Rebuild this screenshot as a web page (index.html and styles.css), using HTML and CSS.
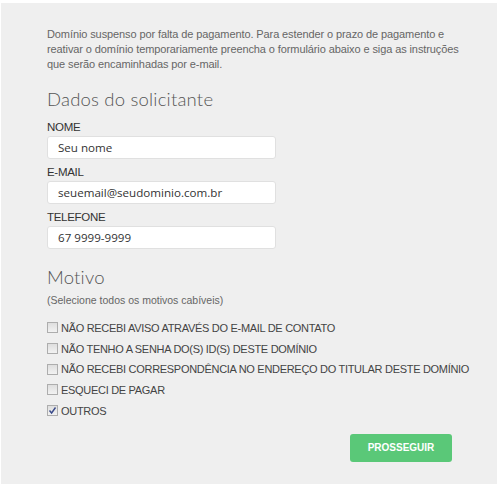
FILE: index.html
```html
<!DOCTYPE html>
<html lang="pt">
<head>
<meta charset="utf-8">
<link rel="stylesheet" href="styles.css">
</head>
<body>
<div class="panel">
  <form class="form">
    <p class="intro">Domínio suspenso por falta de pagamento. Para estender o prazo de pagamento e<br>reativar o domínio temporariamente preencha o formulário abaixo e siga as instruções<br>que serão encaminhadas por e-mail.</p>
    <h2 class="title">Dados do solicitante</h2>
    <label class="field-label first">NOME</label>
    <div class="input">Seu nome</div>
    <label class="field-label">E-MAIL</label>
    <div class="input">seuemail@seudominio.com.br</div>
    <label class="field-label">TELEFONE</label>
    <div class="input">67 9999-9999</div>
    <h2 class="title title-motivo">Motivo</h2>
    <p class="hint">(Selecione todos os motivos cabíveis)</p>
    <ul class="checks">
      <li><span class="box"></span>NÃO RECEBI AVISO ATRAVÉS DO E-MAIL DE CONTATO</li>
      <li><span class="box"></span>NÃO TENHO A SENHA DO(S) ID(S) DESTE DOMÍNIO</li>
      <li><span class="box"></span>NÃO RECEBI CORRESPONDÊNCIA NO ENDEREÇO DO TITULAR DESTE DOMÍNIO</li>
      <li><span class="box"></span>ESQUECI DE PAGAR</li>
      <li><span class="box checked"><svg width="9" height="9" viewBox="0 0 9 9"><path d="M1.5 4.5 L3.6 7 L7.5 1.5" fill="none" stroke="#3a4a8a" stroke-width="1.4"/></svg></span>OUTROS</li>
    </ul>
    <div class="actions"><span class="btn">PROSSEGUIR</span></div>
  </form>
</div>
</body>
</html>
```
FILE: styles.css
```css
html, body { margin: 0; padding: 0; background: #fff; }
body { font-family: "Liberation Sans", Arial, sans-serif; }
.panel {
  margin: 3px 3px 0 1px;
  background: #efefef;
  height: 481px;
  box-sizing: border-box;
  padding: 24px 0 0 46px;
}
.form { width: 405px; }
.intro {
  margin: 0;
  font-size: 11px;
  line-height: 15px;
  color: #666;
  white-space: nowrap;
  letter-spacing: -0.1px;
}
.title {
  margin: 15px 0 0;
  font-family: "Lato", sans-serif;
  font-weight: 300;
  font-size: 18.5px;
  line-height: 24px;
  color: #555;
  letter-spacing: 0.2px;
}
.field-label {
  display: block;
  font-size: 11.5px;
  line-height: 14px;
  color: #333;
  margin-top: 6px;
  letter-spacing: -0.3px;
}
.field-label.first { margin-top: 9px; }
.input {
  margin-top: 2px;
  width: 229px;
  height: 23px;
  box-sizing: border-box;
  background: #fff;
  border: 1px solid #e0e0e0;
  border-radius: 3px;
  padding-left: 10px;
  font-family: "Open Sans", sans-serif;
  font-size: 11.6px;
  line-height: 21px;
  color: #333;
}
.title-motivo { margin-top: 16px; }
.hint {
  margin: 4.5px 0 0;
  font-size: 10.5px;
  line-height: 13px;
  color: #666;
}
.checks {
  list-style: none;
  margin: 11px 0 0;
  padding: 0;
}
.checks li {
  display: flex;
  align-items: center;
  height: 20.7px;
  font-size: 11px;
  color: #444;
  letter-spacing: -0.3px;
  white-space: nowrap;
}
.box {
  flex: none;
  width: 11px;
  height: 11px;
  box-sizing: border-box;
  border: 1px solid #adadad;
  background: linear-gradient(#dedede, #f2f2f2);
  margin: 0 3px 0 0;
  display: inline-flex;
  align-items: center;
  justify-content: center;
}
.actions {
  display: flex;
  justify-content: flex-end;
  margin-top: 13px;
}
.btn {
  width: 102px;
  height: 28px;
  background: #5ac878;
  border-radius: 3px;
  color: #fff;
  font-weight: bold;
  font-size: 10px;
  display: flex;
  align-items: center;
  justify-content: center;
}
```
